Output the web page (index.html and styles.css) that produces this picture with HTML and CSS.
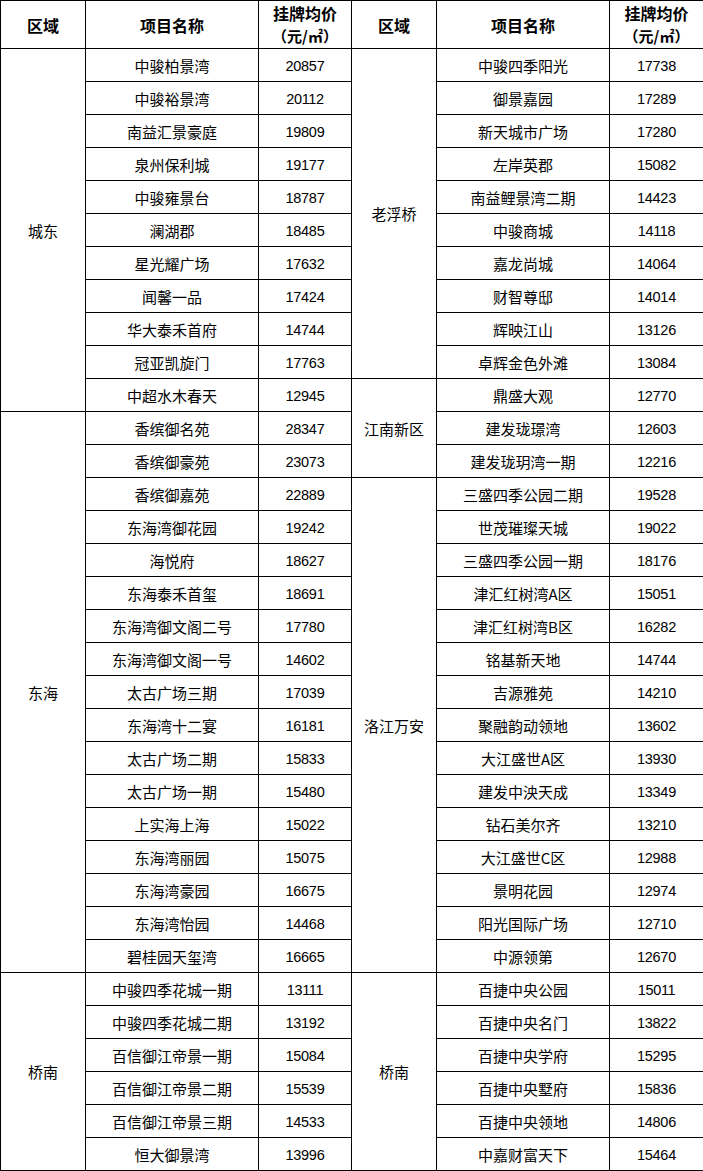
FILE: index.html
```html
<!DOCTYPE html>
<html lang="zh-CN">
<head>
<meta charset="utf-8">
<title>挂牌均价</title>
<link rel="stylesheet" href="styles.css">
</head>
<body>
<table class="price-table">
  <colgroup>
    <col class="c-area"><col class="c-name"><col class="c-price">
    <col class="c-area"><col class="c-name"><col class="c-price2">
  </colgroup>
  <thead>
    <tr class="head-row">
      <th>区域</th><th>项目名称</th><th><span class="h-line">挂牌均价</span><span class="h-line unit">（元/㎡）</span></th>
      <th>区域</th><th>项目名称</th><th><span class="h-line">挂牌均价</span><span class="h-line unit">（元/㎡）</span></th>
    </tr>
  </thead>
  <tbody>
    <tr><td rowspan="11">城东</td><td>中骏柏景湾</td><td class="num">20857</td><td rowspan="10">老浮桥</td><td>中骏四季阳光</td><td class="num">17738</td></tr>
    <tr><td>中骏裕景湾</td><td class="num">20112</td><td>御景嘉园</td><td class="num">17289</td></tr>
    <tr><td>南益汇景豪庭</td><td class="num">19809</td><td>新天城市广场</td><td class="num">17280</td></tr>
    <tr><td>泉州保利城</td><td class="num">19177</td><td>左岸英郡</td><td class="num">15082</td></tr>
    <tr><td>中骏雍景台</td><td class="num">18787</td><td>南益鲤景湾二期</td><td class="num">14423</td></tr>
    <tr><td>澜湖郡</td><td class="num">18485</td><td>中骏商城</td><td class="num">14118</td></tr>
    <tr><td>星光耀广场</td><td class="num">17632</td><td>嘉龙尚城</td><td class="num">14064</td></tr>
    <tr><td>闻馨一品</td><td class="num">17424</td><td>财智尊邸</td><td class="num">14014</td></tr>
    <tr><td>华大泰禾首府</td><td class="num">14744</td><td>辉映江山</td><td class="num">13126</td></tr>
    <tr><td>冠亚凯旋门</td><td class="num">17763</td><td>卓辉金色外滩</td><td class="num">13084</td></tr>
    <tr><td>中超水木春天</td><td class="num">12945</td><td rowspan="3">江南新区</td><td>鼎盛大观</td><td class="num">12770</td></tr>
    <tr><td rowspan="17">东海</td><td>香缤御名苑</td><td class="num">28347</td><td>建发珑璟湾</td><td class="num">12603</td></tr>
    <tr><td>香缤御豪苑</td><td class="num">23073</td><td>建发珑玥湾一期</td><td class="num">12216</td></tr>
    <tr><td>香缤御嘉苑</td><td class="num">22889</td><td rowspan="15">洛江万安</td><td>三盛四季公园二期</td><td class="num">19528</td></tr>
    <tr><td>东海湾御花园</td><td class="num">19242</td><td>世茂璀璨天城</td><td class="num">19022</td></tr>
    <tr><td>海悦府</td><td class="num">18627</td><td>三盛四季公园一期</td><td class="num">18176</td></tr>
    <tr><td>东海泰禾首玺</td><td class="num">18691</td><td>津汇红树湾A区</td><td class="num">15051</td></tr>
    <tr><td>东海湾御文阁二号</td><td class="num">17780</td><td>津汇红树湾B区</td><td class="num">16282</td></tr>
    <tr><td>东海湾御文阁一号</td><td class="num">14602</td><td>铭基新天地</td><td class="num">14744</td></tr>
    <tr><td>太古广场三期</td><td class="num">17039</td><td>吉源雅苑</td><td class="num">14210</td></tr>
    <tr><td>东海湾十二宴</td><td class="num">16181</td><td>聚融韵动领地</td><td class="num">13602</td></tr>
    <tr><td>太古广场二期</td><td class="num">15833</td><td>大江盛世A区</td><td class="num">13930</td></tr>
    <tr><td>太古广场一期</td><td class="num">15480</td><td>建发中泱天成</td><td class="num">13349</td></tr>
    <tr><td>上实海上海</td><td class="num">15022</td><td>钻石美尔齐</td><td class="num">13210</td></tr>
    <tr><td>东海湾丽园</td><td class="num">15075</td><td>大江盛世C区</td><td class="num">12988</td></tr>
    <tr><td>东海湾豪园</td><td class="num">16675</td><td>景明花园</td><td class="num">12974</td></tr>
    <tr><td>东海湾怡园</td><td class="num">14468</td><td>阳光国际广场</td><td class="num">12710</td></tr>
    <tr><td>碧桂园天玺湾</td><td class="num">16665</td><td>中源领第</td><td class="num">12670</td></tr>
    <tr><td rowspan="6">桥南</td><td>中骏四季花城一期</td><td class="num">13111</td><td rowspan="6">桥南</td><td>百捷中央公园</td><td class="num">15011</td></tr>
    <tr><td>中骏四季花城二期</td><td class="num">13192</td><td>百捷中央名门</td><td class="num">13822</td></tr>
    <tr><td>百信御江帝景一期</td><td class="num">15084</td><td>百捷中央学府</td><td class="num">15295</td></tr>
    <tr><td>百信御江帝景二期</td><td class="num">15539</td><td>百捷中央墅府</td><td class="num">15836</td></tr>
    <tr><td>百信御江帝景三期</td><td class="num">14533</td><td>百捷中央领地</td><td class="num">14806</td></tr>
    <tr><td>恒大御景湾</td><td class="num">13996</td><td>中嘉财富天下</td><td class="num">15464</td></tr>
  </tbody>
</table>
</body>
</html>
```

FILE: styles.css
```css
html, body {
  margin: 0;
  padding: 0;
  background: #ffffff;
}

.price-table {
  border-collapse: collapse;
  table-layout: fixed;
  width: 703px;
  font-family: "Noto Sans CJK SC", "Liberation Sans", sans-serif;
  font-size: 15px;
  color: #000;
}

.c-area { width: 85px; }
.c-name { width: 173px; }
.c-price { width: 93px; }
.c-price2 { width: 94px; }

.price-table th,
.price-table td {
  border: 1px solid #000;
  padding: 0;
  text-align: center;
  vertical-align: middle;
  white-space: nowrap;
}

.price-table th {
  font-size: 16px;
  font-weight: bold;
  line-height: 20px;
}

.h-line {
  display: block;
  height: 23px;
  line-height: 23px;
}

.unit {
  font-size: 15px;
  height: 22px;
  line-height: 22px;
}

.head-row { height: 48px; }

.price-table tbody tr { height: 33px; }

.price-table td {
  line-height: 18px;
  padding-top: 1px;
}

.num {
  font-family: "Liberation Sans", sans-serif;
  font-size: 14.5px;
  letter-spacing: -0.3px;
}
```
